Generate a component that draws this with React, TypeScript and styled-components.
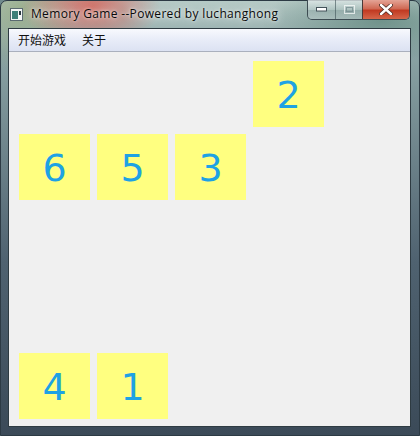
import React from "react";
import styled, { createGlobalStyle } from "styled-components";

const Global = createGlobalStyle`
  html, body { margin: 0; padding: 0; background: #6f8a8c; }
  body { width: 420px; height: 436px; overflow: hidden; }
`;

const Frame = styled.div`
  position: relative;
  width: 420px;
  height: 436px;
  box-sizing: border-box;
  border: 1px solid #2c3a44;
  border-radius: 7px 7px 0 0;
  background:
    radial-gradient(ellipse 70px 40px at 90px 6px, rgba(214, 96, 86, 0.85), rgba(214, 96, 86, 0) 100%),
    radial-gradient(ellipse 60px 60px at 20px 10px, rgba(150, 170, 130, 0.8), rgba(150, 170, 130, 0) 100%),
    radial-gradient(ellipse 120px 40px at 380px 20px, rgba(90, 130, 120, 0.7), rgba(90, 130, 120, 0) 100%),
    linear-gradient(180deg, #b6cac6 0%, #8aa3a4 12%, #4f6270 60%, #3b4a58 100%);
  display: flex;
  flex-direction: column;
  padding: 0 8px 8px 7px;
  font-family: "Open Sans", "Noto Sans CJK SC", sans-serif;
`;

const TitleBar = styled.div`
  height: 27px;
  display: flex;
  align-items: center;
  padding-left: 2px;
  gap: 8px;
`;

const Title = styled.span`
  font-family: "Open Sans", sans-serif;
  font-size: 12px;
  color: #0a0a0a;
  text-shadow: 0 0 8px rgba(255, 255, 255, 0.9), 0 0 3px rgba(255, 255, 255, 0.8);
  margin-top: -2px;
  letter-spacing: 0.33px;
`;

const Captions = styled.div`
  position: absolute;
  top: -1px;
  right: 9px;
  display: flex;
  height: 19px;
  border: 1px solid #3d4c52;
  border-top: none;
  border-radius: 0 0 5px 5px;
  overflow: hidden;
`;

const CapBtn = styled.div<{ $w: number; $close?: boolean }>`
  width: ${(p) => p.$w}px;
  height: 100%;
  display: flex;
  align-items: center;
  justify-content: center;
  box-sizing: border-box;
  border-left: ${(p) => (p.$close ? "1px solid #4a3a38" : "1px solid rgba(60,80,85,0.6)")};
  background: ${(p) =>
    p.$close
      ? "linear-gradient(180deg, #e4a496 0%, #d06a55 45%, #c13a22 55%, #d5664a 100%)"
      : "linear-gradient(180deg, rgba(235,242,242,0.75) 0%, rgba(200,215,215,0.55) 50%, rgba(160,180,180,0.55) 55%, rgba(190,205,205,0.6) 100%)"};
  &:first-child { border-left: none; }
`;

const Client = styled.div`
  flex: 1;
  display: flex;
  flex-direction: column;
  border: 1px solid #2e3b42;
  background: #f0f0f0;
`;

const MenuBar = styled.div`
  height: 22px;
  display: flex;
  align-items: center;
  padding-left: 9px;
  gap: 16px;
  background: linear-gradient(180deg, #f8f9fd 0%, #e9edf8 45%, #dce2f2 100%);
  border-bottom: 1px solid #aab0bd;
`;

const MenuItem = styled.span`
  font-family: "Noto Sans CJK SC", sans-serif;
  font-size: 12px;
  color: #111;
  line-height: 22px;
`;

const Board = styled.div`
  display: grid;
  grid-template-columns: repeat(4, 71px);
  grid-template-rows: repeat(5, 66px);
  column-gap: 7px;
  row-gap: 7px;
  padding: 9px 0 0 10px;
`;

const Tile = styled.div<{ $r: number; $c: number }>`
  grid-row: ${(p) => p.$r};
  grid-column: ${(p) => p.$c};
  background: #ffff80;
  display: flex;
  align-items: center;
  justify-content: center;
  font-family: "DejaVu Sans", sans-serif;
  font-size: 38px;
  color: #1ea2e4;
  padding-top: 1px;
`;

const AppIcon = () => (
  <svg width="13" height="13" viewBox="0 0 13 13">
    <rect x="0.5" y="0.5" width="12" height="12" fill="#f4f6f6" stroke="#5a6a70" />
    <rect x="2" y="3" width="6" height="8" fill="#3e7f78" />
    <rect x="9" y="3" width="2" height="4" fill="#2a3a40" />
  </svg>
);

const tiles = [
  { n: 2, r: 1, c: 4 },
  { n: 6, r: 2, c: 1 },
  { n: 5, r: 2, c: 2 },
  { n: 3, r: 2, c: 3 },
  { n: 4, r: 5, c: 1 },
  { n: 1, r: 5, c: 2 },
];

export default function App() {
  return (
    <>
      <Global />
      <Frame>
        <TitleBar>
          <AppIcon />
          <Title>Memory Game --Powered by luchanghong</Title>
        </TitleBar>
        <Captions>
          <CapBtn $w={27}>
            <svg width="11" height="5" viewBox="0 0 11 5">
              <rect x="0.5" y="0.5" width="10" height="3.5" fill="#fff" stroke="#44535a" />
            </svg>
          </CapBtn>
          <CapBtn $w={27}>
            <svg width="11" height="9" viewBox="0 0 11 9">
              <rect x="0.5" y="0.5" width="10" height="8" fill="none" stroke="rgba(255,255,255,0.7)" />
              <rect x="2.5" y="2.5" width="6" height="4" fill="none" stroke="rgba(120,140,145,0.8)" />
            </svg>
          </CapBtn>
          <CapBtn $w={47} $close>
            <svg width="14" height="11" viewBox="0 0 14 11">
              <path d="M2 1 L12 10 M12 1 L2 10" stroke="#4a2a22" strokeWidth="4" strokeLinecap="round" />
              <path d="M2 1 L12 10 M12 1 L2 10" stroke="#ffffff" strokeWidth="2.4" strokeLinecap="round" />
            </svg>
          </CapBtn>
        </Captions>
        <Client>
          <MenuBar>
            <MenuItem>开始游戏</MenuItem>
            <MenuItem>关于</MenuItem>
          </MenuBar>
          <Board>
            {tiles.map((t) => (
              <Tile key={t.n} $r={t.r} $c={t.c}>
                {t.n}
              </Tile>
            ))}
          </Board>
        </Client>
      </Frame>
    </>
  );
}
